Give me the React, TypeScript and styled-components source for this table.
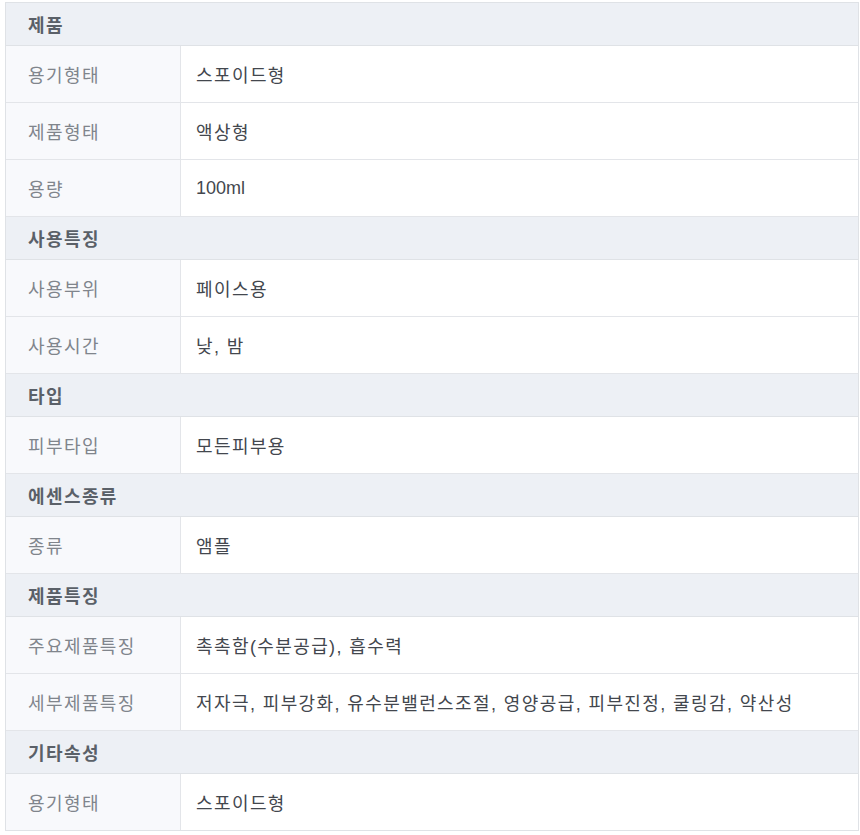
import React from "react";
import styled, { createGlobalStyle } from "styled-components";

const Global = createGlobalStyle`
  html, body { margin: 0; padding: 0; background: #ffffff; }
  body { font-family: "Liberation Sans", "Noto Sans CJK KR", Arial, sans-serif; }
`;

const Page = styled.div`
  padding: 2px 0 0 5px;
`;

const Table = styled.div`
  width: 852px;
  border: 1px solid #dfe2e6;
  display: grid;
  grid-template-columns: 175px 1fr;
  font-size: 18px;
  letter-spacing: 1.4px;
`;

const SectionHeader = styled.div`
  grid-column: 1 / -1;
  height: 42px;
  display: flex;
  align-items: center;
  padding-left: 22px;
  background: #edf0f5;
  color: #5a6068;
  font-weight: 700;
  border-bottom: 1px solid #dfe2e6;
`;

const Label = styled.div<{ $last?: boolean }>`
  height: 56px;
  display: flex;
  align-items: center;
  padding-left: 22px;
  background: #f8f9fc;
  color: #80858c;
  border-right: 1px solid #e3e5e9;
  border-bottom: ${(p) => (p.$last ? "none" : "1px solid #e3e5e9")};
`;

const Value = styled.div<{ $last?: boolean }>`
  height: 56px;
  display: flex;
  align-items: center;
  padding-left: 15px;
  background: #ffffff;
  color: #43474e;
  border-bottom: ${(p) => (p.$last ? "none" : "1px solid #e3e5e9")};
`;

const Latin = styled.span`
  letter-spacing: 0;
`;

type Section = { title: string; rows: [string, React.ReactNode][] };

const data: Section[] = [
  {
    title: "제품",
    rows: [
      ["용기형태", "스포이드형"],
      ["제품형태", "액상형"],
      ["용량", <Latin>100ml</Latin>],
    ],
  },
  {
    title: "사용특징",
    rows: [
      ["사용부위", "페이스용"],
      ["사용시간", "낮, 밤"],
    ],
  },
  { title: "타입", rows: [["피부타입", "모든피부용"]] },
  { title: "에센스종류", rows: [["종류", "앰플"]] },
  {
    title: "제품특징",
    rows: [
      ["주요제품특징", "촉촉함(수분공급), 흡수력"],
      ["세부제품특징", "저자극, 피부강화, 유수분밸런스조절, 영양공급, 피부진정, 쿨링감, 약산성"],
    ],
  },
  { title: "기타속성", rows: [["용기형태", "스포이드형"]] },
];

export default function App() {
  return (
    <Page>
      <Global />
      <Table>
        {data.map((s, si) => (
          <React.Fragment key={si}>
            <SectionHeader>{s.title}</SectionHeader>
            {s.rows.map(([k, v], ri) => {
              const last = si === data.length - 1 && ri === s.rows.length - 1;
              return (
                <React.Fragment key={ri}>
                  <Label $last={last}>{k}</Label>
                  <Value $last={last}>{v}</Value>
                </React.Fragment>
              );
            })}
          </React.Fragment>
        ))}
      </Table>
    </Page>
  );
}
